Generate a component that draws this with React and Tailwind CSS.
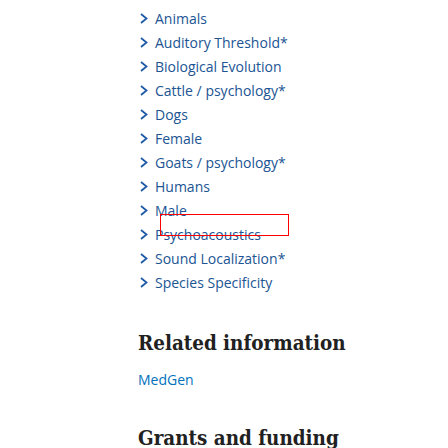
import React from "react";

const items = [
  "Animals",
  "Auditory Threshold*",
  "Biological Evolution",
  "Cattle / psychology*",
  "Dogs",
  "Female",
  "Goats / psychology*",
  "Humans",
  "Male",
  "Psychoacoustics",
  "Sound Localization*",
  "Species Specificity",
];

function Chevron() {
  return (
    <svg width="8" height="11" viewBox="0 0 8 11" className="shrink-0">
      <path d="M1 1 L6.5 5.5 L1 10" fill="none" stroke="#1f5aa6" strokeWidth="1.8" />
    </svg>
  );
}

const serif = { fontFamily: '"DejaVu Serif Condensed", "DejaVu Serif", serif' };

export default function App() {
  return (
    <div className="relative w-[448px] h-[448px] overflow-hidden bg-white pl-[139px] pt-[6px]" style={{ fontFamily: '"Open Sans", "Noto Sans", sans-serif' }}>
      <ul className="flex flex-col">
        {items.map((t) => (
          <li key={t} className="flex items-center h-[24px] text-[14px] text-[#205493]">
            <span className="w-[16px] pl-[1px] flex items-center"><Chevron /></span>
            <span>{t}</span>
          </li>
        ))}
      </ul>
      <h2 className="mt-[34px] -ml-[1px] text-[20.4px] font-bold font-stretch-condensed leading-[30px] text-[#212121]" style={serif}>
        Related information
      </h2>
      <div className="mt-[12px] -ml-[1px] text-[14px] leading-[20px] text-[#0071bc]">MedGen</div>
      <h2 className="mt-[33px] -ml-[1px] text-[20.4px] font-bold font-stretch-condensed leading-[30px] text-[#212121]" style={serif}>
        Grants and funding
      </h2>
      <div className="absolute left-[160px] top-[214px] w-[129px] h-[22px] border-[1.5px] border-[#ff0000]" />
    </div>
  );
}
